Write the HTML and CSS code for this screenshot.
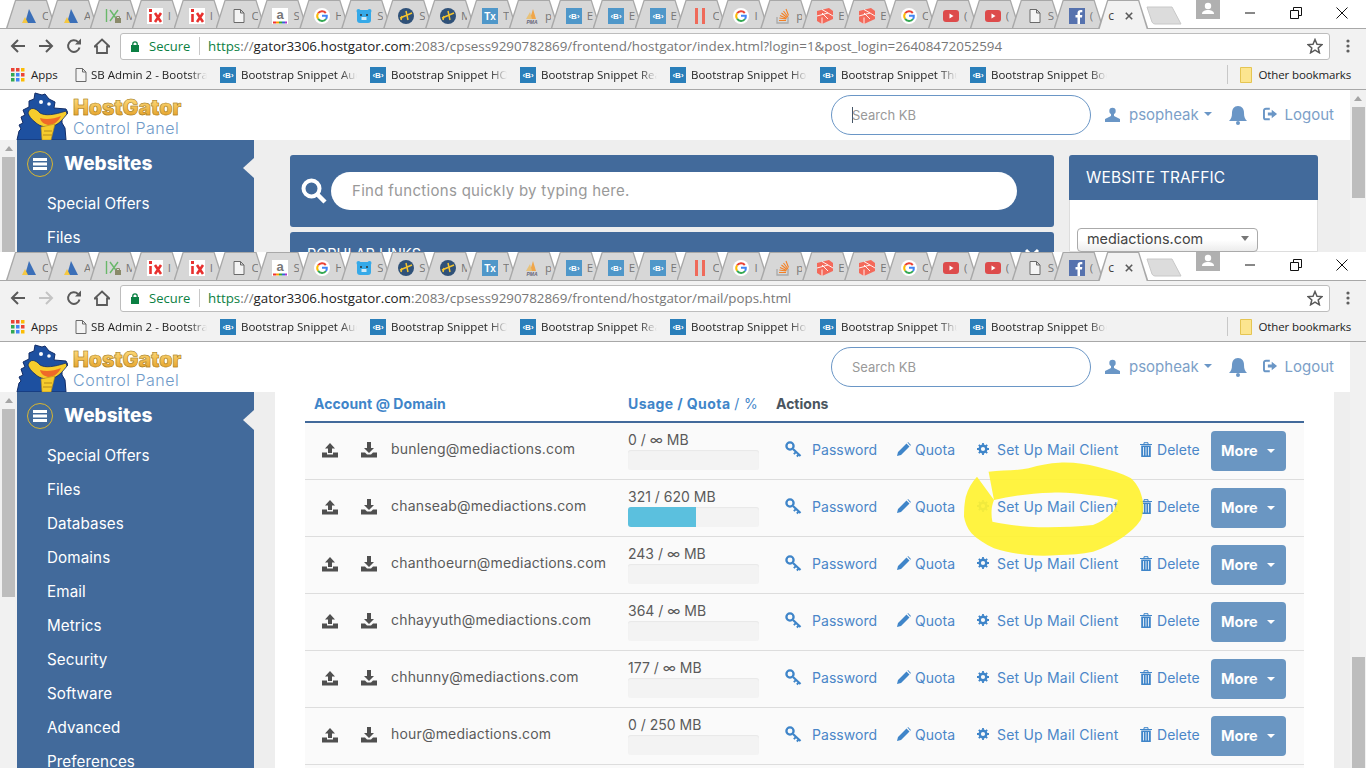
FILE: index.html
```html
<!DOCTYPE html>
<html lang="en">
<head>
<meta charset="utf-8">
<title>HostGator Control Panel</title>
<link rel="stylesheet" href="styles.css">
</head>
<body>
<svg class="defs" aria-hidden="true">
  <symbol id="i-ad" viewBox="0 0 16 16"><path d="M8 1 15 15H4Z" fill="#3b6fb8"/><path d="M1 15 4 9l3 6Z" fill="#f5c842"/></symbol>
  <symbol id="i-ixg" viewBox="0 0 16 16"><path d="M1.5 1v13M5 2l8 11M13 2 5 13" stroke="#69b86a" stroke-width="1.4" fill="none"/><rect x="10" y="10" width="6" height="5" fill="#8a8a6a"/><path d="M11.5 10V8.5h3V10" stroke="#8a8a6a" fill="none"/></symbol>
  <symbol id="i-ix" viewBox="0 0 16 16"><rect width="16" height="16" fill="#fff"/><path d="M3.5 6v8M8 5l6 9M14 5l-6 9" stroke="#e8312f" stroke-width="2.6" fill="none"/><rect x="2" y="1" width="3" height="3" fill="#e8312f"/></symbol>
  <symbol id="i-doc" viewBox="0 0 16 16"><path d="M3 1.5h6.5l3.5 3.5v9.500H3ZM9.500 1.500V5H13" fill="#f4f4f4" stroke="#6a6a6a"/></symbol>
  <symbol id="i-am" viewBox="0 0 16 16"><rect width="16" height="16" fill="#fff"/><text x="8" y="11" text-anchor="middle" class="ic-a">a</text><path d="M1 14.500h3" stroke="#e33" stroke-width="2"/><path d="M4 14.500h3" stroke="#f90" stroke-width="2"/><path d="M7 14.500h3" stroke="#3a3" stroke-width="2"/><path d="M10 14.500h3" stroke="#36c" stroke-width="2"/><path d="M13 14.500h2" stroke="#a3c" stroke-width="2"/></symbol>
  <symbol id="i-g" viewBox="0 0 16 16"><circle cx="8" cy="8" r="8" fill="#fff"/><path d="M11.800 5A4.800 4.800 0 0 0 4.100 5.300" stroke="#ea4335" stroke-width="2" fill="none"/><path d="M4.100 5.300a4.800 4.800 0 0 0 0 5.400" stroke="#fbbc05" stroke-width="2" fill="none"/><path d="M4.100 10.700A4.800 4.800 0 0 0 12 11" stroke="#34a853" stroke-width="2" fill="none"/><path d="M12 11a4.800 4.800 0 0 0 .8-3.200H8" stroke="#4285f4" stroke-width="2" fill="none"/></symbol>
  <symbol id="i-bear" viewBox="0 0 16 16"><circle cx="2.500" cy="3" r="2" fill="#35a9e8"/><circle cx="13.500" cy="3" r="2" fill="#35a9e8"/><rect x="1" y="2" width="14" height="13" rx="3" fill="#35a9e8"/><circle cx="5" cy="7" r="1" fill="#333"/><circle cx="11" cy="7" r="1" fill="#333"/><path d="M5.500 9h5v3h-5z" fill="#cfeaf8"/></symbol>
  <symbol id="i-plane" viewBox="0 0 16 16"><circle cx="8" cy="8" r="8" fill="#2f5178"/><path d="M2 10 14 5M8 3l2 9M4 8 3 12" stroke="#f4c430" stroke-width="1.500" fill="none"/></symbol>
  <symbol id="i-tx" viewBox="0 0 16 16"><rect width="16" height="16" fill="#4f97c9"/><text x="8" y="12" text-anchor="middle" class="ic-t">Tx</text></symbol>
  <symbol id="i-pma" viewBox="0 0 16 16"><path d="M6 11 9 1l3 10Z" fill="#f0a64a"/><path d="M2 11 6 4l2 7Z" fill="#e8c27a"/><text x="8" y="15.500" text-anchor="middle" class="ic-p">PMA</text></symbol>
  <symbol id="i-b" viewBox="0 0 16 16"><rect width="16" height="16" fill="#4f97c9"/><text x="8" y="11" text-anchor="middle" class="ic-b">‹B›</text></symbol>
  <symbol id="i-pause" viewBox="0 0 16 16"><rect x="3" y="0" width="3" height="16" fill="#ef6a5a"/><rect x="10" y="0" width="3" height="16" fill="#ef6a5a"/></symbol>
  <symbol id="i-so" viewBox="0 0 16 16"><path d="M2 9v6h11V9" stroke="#aaa" stroke-width="1.300" fill="none"/><path d="M4 12.500h7M4.300 10l7 1M5 7.500l6.500 3M6.500 5l5.500 4.500M8.500 3l4.500 6M11 1l2.500 6.500" stroke="#f48024" stroke-width="1.100" fill="none"/></symbol>
  <symbol id="i-lar" viewBox="0 0 16 16"><path d="M0 3 12 0 16 3V11L5 16 0 13Z" fill="#f4695a"/><path d="M0 8 11 5 16 8M5 16V9.500M11 5 5 1.500M5 5 11 11" stroke="#fff" stroke-width=".9" fill="none"/></symbol>
  <symbol id="i-yt" viewBox="0 0 16 16"><rect y="2" width="16" height="12" rx="3" fill="#dd4b4b"/><path d="M6.500 5.500v5l4-2.500Z" fill="#fff"/></symbol>
  <symbol id="i-fb" viewBox="0 0 16 16"><rect width="16" height="16" fill="#5672ae"/><path d="M11 16V9.500h2l.3-2.500H11V5.500c0-.8.3-1.200 1.200-1.200h1.100V2.100c-2.800-.5-4.800.3-4.800 3V7H6.500v2.500h2V16Z" fill="#fff"/></symbol>
  <symbol id="i-apps" viewBox="0 0 14 14"><rect width="3.500" height="3.500" fill="#ea4335"/><rect x="5" width="3.500" height="3.500" fill="#ea4335"/><rect x="10" width="3.500" height="3.500" fill="#fbbc05"/><rect y="5" width="3.500" height="3.500" fill="#34a853"/><rect x="5" y="5" width="3.500" height="3.500" fill="#4285f4"/><rect x="10" y="5" width="3.500" height="3.500" fill="#ea4335"/><rect y="10" width="3.500" height="3.500" fill="#34a853"/><rect x="5" y="10" width="3.500" height="3.500" fill="#4285f4"/><rect x="10" y="10" width="3.500" height="3.500" fill="#fbbc05"/></symbol>
  <symbol id="i-bb" viewBox="0 0 16 16"><rect width="16" height="16" fill="#2a7fba"/><text x="8" y="11" text-anchor="middle" class="ic-b">‹B›</text></symbol>
  <symbol id="i-up" viewBox="0 0 16 16"><path d="M8 1 13 6.500H10V11H6V6.500H3Z" fill="#4f4f4f"/><path d="M0 10.500H5V12.500H11V10.500H16V15.500H0Z" fill="#4f4f4f"/></symbol>
  <symbol id="i-down" viewBox="0 0 16 16"><path d="M6 0H10V6H13L8 11 3 6H6Z" fill="#4f4f4f"/><path d="M0 10.500H4L6 12.500H10L12 10.500H16V15.500H0Z" fill="#4f4f4f"/></symbol>
  <symbol id="i-key" viewBox="0 0 17 17"><circle cx="5" cy="5" r="3.600" fill="none" stroke="#3f85c9" stroke-width="2.300"/><path d="M8 8 15.500 15" stroke="#3f85c9" stroke-width="2.200" fill="none"/><path d="M11 11 8.800 13.200M13.800 13.500 11.800 15.500" stroke="#3f85c9" stroke-width="1.800" fill="none"/></symbol>
  <symbol id="i-pen" viewBox="0 0 14 14"><path d="M0 14 1 10 9.500 1.500 12.500 4.500 4 13Z M10.500.5 11 0l3 3-.8.8Z" fill="#3f85c9"/></symbol>
  <symbol id="i-gear" viewBox="0 0 12 12"><circle cx="6" cy="6" r="3.300" fill="none" stroke="#3f85c9" stroke-width="2.400"/><path d="M6 0v2.500M6 9.500V12M0 6h2.500M9.500 6H12M1.800 1.800l1.800 1.800M8.400 8.400l1.800 1.800M1.800 10.200l1.800-1.800M8.400 3.600l1.800-1.800" stroke="#3f85c9" stroke-width="1.800"/></symbol>
  <symbol id="i-trash" viewBox="0 0 12 15"><path d="M0 2.500H12M4 2.500V.7H8V2.500" stroke="#3f85c9" fill="none"/><path d="M1.200 3.500H10.800V15H1.200Z" fill="#3f85c9"/><path d="M3.500 5V13.500M6 5V13.500M8.500 5V13.500" stroke="#dbe8f5" stroke-width="1"/></symbol>
  <symbol id="i-user" viewBox="0 0 15 15"><circle cx="7.500" cy="4" r="3.200" fill="#6a96c6"/><path d="M6 7h3v2l6 3v3H0v-3l6-3Z" fill="#6a96c6"/></symbol>
  <symbol id="i-bell" viewBox="0 0 20 20"><path d="M10 1c4 0 6 3 6 7 0 4 1 6 3 8H1c2-2 3-4 3-8 0-4 2-7 6-7Z" fill="#6a96c6"/><circle cx="10" cy="18" r="2" fill="#6a96c6"/></symbol>
  <symbol id="i-out" viewBox="0 0 15 14"><path d="M7 1.500H3A2 2 0 0 0 1 3.500V10.500A2 2 0 0 0 3 12.500H7" fill="none" stroke="#6a96c6" stroke-width="2"/><path d="M5 5.500H9V2.500L14.500 7 9 11.500V8.500H5Z" fill="#6a96c6"/></symbol>
  <symbol id="i-gator" viewBox="0 0 52 48"><path d="M1 48 3 39 5 37 3 33 7 31 5 25 9 23 7 18 13 15 13 9 18 7 19 1 26 3 29 2 33 7 39 10 38 16 50 17 52 21 49 23 46 27 46 31 49 36 50 48Z" fill="#1d50a0" stroke="#122c66"/><path d="M12 21C14 14 20 16 24 21 29 24 38 23 50 19L51 22C47 27 44 31 38 34 31 36 24 35 19 30 15 27 13 24 12 21Z" fill="#f6cc2c" stroke="#122c66" stroke-width=".8"/><path d="M24 26C30 28 38 27 45 24 43 29 38 33 32 33 28 32 25 30 24 26Z" fill="#ef6a28"/><path d="M25 35 39 32 35 48H26Z" fill="#f6cc2c" stroke="#b68a1c" stroke-width=".6"/><path d="M28 39H36M27 43H36" stroke="#b68a1c"/><circle cx="25" cy="10" r="2" fill="#fff"/><circle cx="33" cy="12" r="1.800" fill="#fff"/></symbol>
  <symbol id="i-server" viewBox="0 0 26 26"><circle cx="13" cy="13" r="12.500" fill="none" stroke="#d9b62f"/><path d="M6 7H20V10H6ZM6 11.500H20V14.500H6ZM6 16H20V19H6Z" fill="#fff"/></symbol>
  <symbol id="i-search" viewBox="0 0 26 26"><circle cx="10.500" cy="10.500" r="8" fill="none" stroke="#fff" stroke-width="4"/><path d="M16.500 16.500 24 24" stroke="#fff" stroke-width="4.500"/></symbol>
  <symbol id="i-lock" viewBox="0 0 8 11"><rect y="4" width="8" height="7" fill="#0b8043"/><path d="M1.800 4.500V3a2.200 2.200 0 0 1 4.400 0V4.500" fill="none" stroke="#0b8043" stroke-width="1.300"/></symbol>
  <symbol id="i-star" viewBox="0 0 16 16"><path d="M8 1.500 10 6.200 15 6.600 11.200 9.900 12.400 14.800 8 12.200 3.600 14.800 4.800 9.900 1 6.600 6 6.200Z" fill="none" stroke="#5a5a5a" stroke-width="1.500"/></symbol>
  <symbol id="i-dots" viewBox="0 0 4 14"><circle cx="2" cy="2" r="1.600" fill="#5f5f5f"/><circle cx="2" cy="7" r="1.600" fill="#5f5f5f"/><circle cx="2" cy="12" r="1.600" fill="#5f5f5f"/></symbol>
  <symbol id="i-back" viewBox="0 0 16 16"><path d="M15 8H2M8 2 2 8l6 6" fill="none" stroke="currentColor" stroke-width="2"/></symbol>
  <symbol id="i-fwd" viewBox="0 0 16 16"><path d="M1 8H14M8 2l6 6-6 6" fill="none" stroke="currentColor" stroke-width="2"/></symbol>
  <symbol id="i-reload" viewBox="0 0 16 16"><path d="M13.500 9.500A5.800 5.800 0 1 1 12 4" fill="none" stroke="#5a5a5a" stroke-width="2"/><path d="M9 6.500H15V.5Z" fill="#5a5a5a"/></symbol>
  <symbol id="i-home" viewBox="0 0 16 16"><path d="M8 1.500 15.500 8.500H13V15H3V8.500H.5Z" fill="none" stroke="#5a5a5a" stroke-width="1.800"/></symbol>
  <symbol id="i-folder" viewBox="0 0 12 16"><path d="M.5.500H11.500V15.500H.5Z" fill="#fce58f" stroke="#e5c552"/></symbol>
  <symbol id="i-person" viewBox="0 0 24 19"><circle cx="12" cy="6" r="3.200" fill="#fff"/><path d="M6 14c0-3 3-4 6-4s6 1 6 4Z" fill="#fff"/></symbol>
  <symbol id="i-newtab" viewBox="0 0 36 19"><path d="M1 1H26L35 18H9Q7 18 6 16Z" fill="#dcdcdc" stroke="#c8c8c8"/></symbol>
  <symbol id="i-min" viewBox="0 0 12 12"><path d="M1 6H11" stroke="#111" stroke-width="1"/></symbol>
  <symbol id="i-max" viewBox="0 0 12 12"><path d="M.5 3.500H8.500V11.500H.5ZM3.500 3.500V.5H11.500V8.500H8.500" fill="none" stroke="#111"/></symbol>
  <symbol id="i-close" viewBox="0 0 12 12"><path d="M.5.500 11.500 11.500M11.500.5.500 11.500" stroke="#111"/></symbol>
  <symbol id="i-x" viewBox="0 0 10 10"><path d="M1 1 9 9M9 1 1 9" stroke="#5a5a5a" stroke-width="2"/></symbol>
</svg>

<section class="win win-a">
  <div class="tabstrip">
    <div class="tab"><svg class="fav"><use href="#i-ad"/></svg><span class="tl">C</span></div>
    <div class="tab"><svg class="fav"><use href="#i-ad"/></svg><span class="tl">A</span></div>
    <div class="tab"><svg class="fav"><use href="#i-ixg"/></svg><span class="tl">M</span></div>
    <div class="tab"><svg class="fav"><use href="#i-ix"/></svg><span class="tl">I</span></div>
    <div class="tab"><svg class="fav"><use href="#i-ix"/></svg><span class="tl">I</span></div>
    <div class="tab"><svg class="fav"><use href="#i-doc"/></svg><span class="tl">C</span></div>
    <div class="tab"><svg class="fav"><use href="#i-am"/></svg><span class="tl">S</span></div>
    <div class="tab"><svg class="fav"><use href="#i-g"/></svg><span class="tl">H</span></div>
    <div class="tab"><svg class="fav"><use href="#i-bear"/></svg><span class="tl">S</span></div>
    <div class="tab"><svg class="fav"><use href="#i-plane"/></svg><span class="tl">S</span></div>
    <div class="tab"><svg class="fav"><use href="#i-plane"/></svg><span class="tl">M</span></div>
    <div class="tab"><svg class="fav"><use href="#i-tx"/></svg><span class="tl">T</span></div>
    <div class="tab"><svg class="fav"><use href="#i-pma"/></svg><span class="tl">p</span></div>
    <div class="tab"><svg class="fav"><use href="#i-b"/></svg><span class="tl">E</span></div>
    <div class="tab"><svg class="fav"><use href="#i-b"/></svg><span class="tl">E</span></div>
    <div class="tab"><svg class="fav"><use href="#i-b"/></svg><span class="tl">E</span></div>
    <div class="tab"><svg class="fav"><use href="#i-pause"/></svg><span class="tl">C</span></div>
    <div class="tab"><svg class="fav"><use href="#i-g"/></svg><span class="tl">I</span></div>
    <div class="tab"><svg class="fav"><use href="#i-so"/></svg><span class="tl">p</span></div>
    <div class="tab"><svg class="fav"><use href="#i-lar"/></svg><span class="tl">E</span></div>
    <div class="tab"><svg class="fav"><use href="#i-lar"/></svg><span class="tl">E</span></div>
    <div class="tab"><svg class="fav"><use href="#i-g"/></svg><span class="tl">C</span></div>
    <div class="tab"><svg class="fav"><use href="#i-yt"/></svg><span class="tl">(</span></div>
    <div class="tab"><svg class="fav"><use href="#i-yt"/></svg><span class="tl">(</span></div>
    <div class="tab"><svg class="fav"><use href="#i-doc"/></svg><span class="tl">S</span></div>
    <div class="tab"><svg class="fav"><use href="#i-fb"/></svg><span class="tl">(</span></div>
    <div class="tab tab-on"><span class="tl-on">c</span><svg class="tabx"><use href="#i-x"/></svg></div>
    <svg class="newtab"><use href="#i-newtab"/></svg>
    <div class="profile"><svg class="person"><use href="#i-person"/></svg></div>
    <div class="winbtn"><svg class="wi"><use href="#i-min"/></svg></div>
    <div class="winbtn"><svg class="wi"><use href="#i-max"/></svg></div>
    <div class="winbtn"><svg class="wi"><use href="#i-close"/></svg></div>
  </div>
  <div class="toolbar">
    <div class="nav"><svg class="ni"><use href="#i-back"/></svg></div>
    <div class="nav"><svg class="ni"><use href="#i-fwd"/></svg></div>
    <div class="nav"><svg class="ni"><use href="#i-reload"/></svg></div>
    <div class="nav"><svg class="ni"><use href="#i-home"/></svg></div>
    <div class="omni">
      <svg class="lock"><use href="#i-lock"/></svg><span class="secure">Secure</span><span class="osep"></span>
      <span class="url"><span class="u-s">https</span>://<span class="u-h">gator3306.hostgator.com</span>:2083/cpsess9290782869/frontend/hostgator/index.html?login=1&amp;post_login=26408472052594</span>
      <svg class="star"><use href="#i-star"/></svg>
    </div>
    <div class="menu"><svg class="dots"><use href="#i-dots"/></svg></div>
  </div>
  <div class="bookmarks">
    <div class="bm bm-apps"><svg class="bmi-apps"><use href="#i-apps"/></svg><span>Apps</span></div>
    <div class="bm bm-sb"><svg class="bmi"><use href="#i-doc"/></svg><span class="bl">SB Admin 2 - Bootstrap</span></div>
    <div class="bm"><svg class="bmi"><use href="#i-bb"/></svg><span class="bl">Bootstrap Snippet Auc</span></div>
    <div class="bm"><svg class="bmi"><use href="#i-bb"/></svg><span class="bl">Bootstrap Snippet HO</span></div>
    <div class="bm"><svg class="bmi"><use href="#i-bb"/></svg><span class="bl">Bootstrap Snippet Rea</span></div>
    <div class="bm"><svg class="bmi"><use href="#i-bb"/></svg><span class="bl">Bootstrap Snippet Ho</span></div>
    <div class="bm"><svg class="bmi"><use href="#i-bb"/></svg><span class="bl">Bootstrap Snippet Thu</span></div>
    <div class="bm"><svg class="bmi"><use href="#i-bb"/></svg><span class="bl">Bootstrap Snippet Boo</span></div>
    <div class="bm-other"><svg class="bmf"><use href="#i-folder"/></svg><span>Other bookmarks</span></div>
  </div>
  <div class="page">
    <div class="page-main">
      <header class="hdr">
        <div class="logo"><svg class="gator"><use href="#i-gator"/></svg><div class="logo-t"><div class="lg1">HostGator</div><div class="lg2">Control Panel</div></div></div>
        <div class="kb kb-focus"><span class="caret-i"></span>Search KB</div>
        <div class="hu"><svg class="hu-i"><use href="#i-user"/></svg><span>psopheak</span><span class="dd"></span></div>
        <div class="hb"><svg class="hb-i"><use href="#i-bell"/></svg></div>
        <div class="hl"><svg class="hl-i"><use href="#i-out"/></svg><span>Logout</span></div>
      </header>
      <div class="body">
        <div class="sscroll"><span class="sarrow"></span><span class="sthumb"></span></div>
        <nav class="side">
          <div class="side-h"><svg class="srv"><use href="#i-server"/></svg><span>Websites</span><i class="notch"></i></div>
          <div class="side-i">Special Offers</div>
          <div class="side-i">Files</div>
        </nav>
        <main class="home">
          <div class="home-l">
            <div class="findp"><svg class="findi"><use href="#i-search"/></svg><div class="findb">Find functions quickly by typing here.</div></div>
            <div class="popular"><span>POPULAR LINKS</span><span class="pchev"></span></div>
          </div>
          <aside class="traffic">
            <div class="traffic-h">WEBSITE TRAFFIC</div>
            <div class="traffic-b"><div class="sel"><span>mediactions.com</span><i class="sel-a"></i></div></div>
          </aside>
        </main>
      </div>
    </div>
    <div class="vscroll"><span class="sarrow"></span><span class="vthumb-a"></span></div>
  </div>
</section>

<section class="win win-b">
  <div class="tabstrip">
    <div class="tab"><svg class="fav"><use href="#i-ad"/></svg><span class="tl">C</span></div>
    <div class="tab"><svg class="fav"><use href="#i-ad"/></svg><span class="tl">A</span></div>
    <div class="tab"><svg class="fav"><use href="#i-ixg"/></svg><span class="tl">M</span></div>
    <div class="tab"><svg class="fav"><use href="#i-ix"/></svg><span class="tl">I</span></div>
    <div class="tab"><svg class="fav"><use href="#i-ix"/></svg><span class="tl">I</span></div>
    <div class="tab"><svg class="fav"><use href="#i-doc"/></svg><span class="tl">C</span></div>
    <div class="tab"><svg class="fav"><use href="#i-am"/></svg><span class="tl">S</span></div>
    <div class="tab"><svg class="fav"><use href="#i-g"/></svg><span class="tl">H</span></div>
    <div class="tab"><svg class="fav"><use href="#i-bear"/></svg><span class="tl">S</span></div>
    <div class="tab"><svg class="fav"><use href="#i-plane"/></svg><span class="tl">S</span></div>
    <div class="tab"><svg class="fav"><use href="#i-plane"/></svg><span class="tl">M</span></div>
    <div class="tab"><svg class="fav"><use href="#i-tx"/></svg><span class="tl">T</span></div>
    <div class="tab"><svg class="fav"><use href="#i-pma"/></svg><span class="tl">p</span></div>
    <div class="tab"><svg class="fav"><use href="#i-b"/></svg><span class="tl">E</span></div>
    <div class="tab"><svg class="fav"><use href="#i-b"/></svg><span class="tl">E</span></div>
    <div class="tab"><svg class="fav"><use href="#i-b"/></svg><span class="tl">E</span></div>
    <div class="tab"><svg class="fav"><use href="#i-pause"/></svg><span class="tl">C</span></div>
    <div class="tab"><svg class="fav"><use href="#i-g"/></svg><span class="tl">I</span></div>
    <div class="tab"><svg class="fav"><use href="#i-so"/></svg><span class="tl">p</span></div>
    <div class="tab"><svg class="fav"><use href="#i-lar"/></svg><span class="tl">E</span></div>
    <div class="tab"><svg class="fav"><use href="#i-lar"/></svg><span class="tl">E</span></div>
    <div class="tab"><svg class="fav"><use href="#i-g"/></svg><span class="tl">C</span></div>
    <div class="tab"><svg class="fav"><use href="#i-yt"/></svg><span class="tl">(</span></div>
    <div class="tab"><svg class="fav"><use href="#i-yt"/></svg><span class="tl">(</span></div>
    <div class="tab"><svg class="fav"><use href="#i-doc"/></svg><span class="tl">S</span></div>
    <div class="tab"><svg class="fav"><use href="#i-fb"/></svg><span class="tl">(</span></div>
    <div class="tab tab-on"><span class="tl-on">c</span><svg class="tabx"><use href="#i-x"/></svg></div>
    <svg class="newtab"><use href="#i-newtab"/></svg>
    <div class="profile"><svg class="person"><use href="#i-person"/></svg></div>
    <div class="winbtn"><svg class="wi"><use href="#i-min"/></svg></div>
    <div class="winbtn"><svg class="wi"><use href="#i-max"/></svg></div>
    <div class="winbtn"><svg class="wi"><use href="#i-close"/></svg></div>
  </div>
  <div class="toolbar">
    <div class="nav"><svg class="ni"><use href="#i-back"/></svg></div>
    <div class="nav nav-off"><svg class="ni"><use href="#i-fwd"/></svg></div>
    <div class="nav"><svg class="ni"><use href="#i-reload"/></svg></div>
    <div class="nav"><svg class="ni"><use href="#i-home"/></svg></div>
    <div class="omni">
      <svg class="lock"><use href="#i-lock"/></svg><span class="secure">Secure</span><span class="osep"></span>
      <span class="url"><span class="u-s">https</span>://<span class="u-h">gator3306.hostgator.com</span>:2083/cpsess9290782869/frontend/hostgator/mail/pops.html</span>
      <svg class="star"><use href="#i-star"/></svg>
    </div>
    <div class="menu"><svg class="dots"><use href="#i-dots"/></svg></div>
  </div>
  <div class="bookmarks">
    <div class="bm bm-apps"><svg class="bmi-apps"><use href="#i-apps"/></svg><span>Apps</span></div>
    <div class="bm bm-sb"><svg class="bmi"><use href="#i-doc"/></svg><span class="bl">SB Admin 2 - Bootstrap</span></div>
    <div class="bm"><svg class="bmi"><use href="#i-bb"/></svg><span class="bl">Bootstrap Snippet Auc</span></div>
    <div class="bm"><svg class="bmi"><use href="#i-bb"/></svg><span class="bl">Bootstrap Snippet HO</span></div>
    <div class="bm"><svg class="bmi"><use href="#i-bb"/></svg><span class="bl">Bootstrap Snippet Rea</span></div>
    <div class="bm"><svg class="bmi"><use href="#i-bb"/></svg><span class="bl">Bootstrap Snippet Ho</span></div>
    <div class="bm"><svg class="bmi"><use href="#i-bb"/></svg><span class="bl">Bootstrap Snippet Thu</span></div>
    <div class="bm"><svg class="bmi"><use href="#i-bb"/></svg><span class="bl">Bootstrap Snippet Boo</span></div>
    <div class="bm-other"><svg class="bmf"><use href="#i-folder"/></svg><span>Other bookmarks</span></div>
  </div>
  <div class="page">
    <div class="page-main">
      <header class="hdr">
        <div class="logo"><svg class="gator"><use href="#i-gator"/></svg><div class="logo-t"><div class="lg1">HostGator</div><div class="lg2">Control Panel</div></div></div>
        <div class="kb">Search KB</div>
        <div class="hu"><svg class="hu-i"><use href="#i-user"/></svg><span>psopheak</span><span class="dd"></span></div>
        <div class="hb"><svg class="hb-i"><use href="#i-bell"/></svg></div>
        <div class="hl"><svg class="hl-i"><use href="#i-out"/></svg><span>Logout</span></div>
      </header>
      <div class="body">
        <div class="sscroll"><span class="sarrow"></span><span class="sthumb"></span></div>
        <nav class="side">
          <div class="side-h"><svg class="srv"><use href="#i-server"/></svg><span>Websites</span><i class="notch"></i></div>
          <div class="side-i">Special Offers</div>
          <div class="side-i">Files</div>
          <div class="side-i">Databases</div>
          <div class="side-i">Domains</div>
          <div class="side-i">Email</div>
          <div class="side-i">Metrics</div>
          <div class="side-i">Security</div>
          <div class="side-i">Software</div>
          <div class="side-i">Advanced</div>
          <div class="side-i">Preferences</div>
        </nav>
        <main class="mail">
          <div class="mail-in">
            <div class="thead"><span class="th-a">Account @ Domain</span><span class="th-u">Usage / Quota <em>/ %</em></span><span class="th-c">Actions</span></div>

            <div class="row">
              <div class="c-io"><svg class="io"><use href="#i-up"/></svg><svg class="io"><use href="#i-down"/></svg></div>
              <div class="c-mail">bunleng@mediactions.com</div>
              <div class="c-use"><div class="u-t">0 / ∞ MB</div><div class="bar"></div></div>
              <div class="a-pw"><svg class="a-key"><use href="#i-key"/></svg>Password</div>
              <div class="a-q"><svg class="a-pen"><use href="#i-pen"/></svg>Quota</div>
              <div class="a-c"><svg class="a-gear"><use href="#i-gear"/></svg>Set Up Mail Client</div>
              <div class="a-d"><svg class="a-tr"><use href="#i-trash"/></svg>Delete</div>
              <div class="more">More<span class="more-c"></span></div>
            </div>
            <div class="row">
              <div class="c-io"><svg class="io"><use href="#i-up"/></svg><svg class="io"><use href="#i-down"/></svg></div>
              <div class="c-mail">chanseab@mediactions.com</div>
              <div class="c-use"><div class="u-t">321 / 620 MB</div><div class="bar"><div class="fill" style="width:52%"></div></div></div>
              <div class="a-pw"><svg class="a-key"><use href="#i-key"/></svg>Password</div>
              <div class="a-q"><svg class="a-pen"><use href="#i-pen"/></svg>Quota</div>
              <div class="a-c"><svg class="a-gear"><use href="#i-gear"/></svg>Set Up Mail Client</div>
              <div class="a-d"><svg class="a-tr"><use href="#i-trash"/></svg>Delete</div>
              <div class="more">More<span class="more-c"></span></div>
            </div>
            <div class="row">
              <div class="c-io"><svg class="io"><use href="#i-up"/></svg><svg class="io"><use href="#i-down"/></svg></div>
              <div class="c-mail">chanthoeurn@mediactions.com</div>
              <div class="c-use"><div class="u-t">243 / ∞ MB</div><div class="bar"></div></div>
              <div class="a-pw"><svg class="a-key"><use href="#i-key"/></svg>Password</div>
              <div class="a-q"><svg class="a-pen"><use href="#i-pen"/></svg>Quota</div>
              <div class="a-c"><svg class="a-gear"><use href="#i-gear"/></svg>Set Up Mail Client</div>
              <div class="a-d"><svg class="a-tr"><use href="#i-trash"/></svg>Delete</div>
              <div class="more">More<span class="more-c"></span></div>
            </div>
            <div class="row">
              <div class="c-io"><svg class="io"><use href="#i-up"/></svg><svg class="io"><use href="#i-down"/></svg></div>
              <div class="c-mail">chhayyuth@mediactions.com</div>
              <div class="c-use"><div class="u-t">364 / ∞ MB</div><div class="bar"></div></div>
              <div class="a-pw"><svg class="a-key"><use href="#i-key"/></svg>Password</div>
              <div class="a-q"><svg class="a-pen"><use href="#i-pen"/></svg>Quota</div>
              <div class="a-c"><svg class="a-gear"><use href="#i-gear"/></svg>Set Up Mail Client</div>
              <div class="a-d"><svg class="a-tr"><use href="#i-trash"/></svg>Delete</div>
              <div class="more">More<span class="more-c"></span></div>
            </div>
            <div class="row">
              <div class="c-io"><svg class="io"><use href="#i-up"/></svg><svg class="io"><use href="#i-down"/></svg></div>
              <div class="c-mail">chhunny@mediactions.com</div>
              <div class="c-use"><div class="u-t">177 / ∞ MB</div><div class="bar"></div></div>
              <div class="a-pw"><svg class="a-key"><use href="#i-key"/></svg>Password</div>
              <div class="a-q"><svg class="a-pen"><use href="#i-pen"/></svg>Quota</div>
              <div class="a-c"><svg class="a-gear"><use href="#i-gear"/></svg>Set Up Mail Client</div>
              <div class="a-d"><svg class="a-tr"><use href="#i-trash"/></svg>Delete</div>
              <div class="more">More<span class="more-c"></span></div>
            </div>
            <div class="row">
              <div class="c-io"><svg class="io"><use href="#i-up"/></svg><svg class="io"><use href="#i-down"/></svg></div>
              <div class="c-mail">hour@mediactions.com</div>
              <div class="c-use"><div class="u-t">0 / 250 MB</div><div class="bar"></div></div>
              <div class="a-pw"><svg class="a-key"><use href="#i-key"/></svg>Password</div>
              <div class="a-q"><svg class="a-pen"><use href="#i-pen"/></svg>Quota</div>
              <div class="a-c"><svg class="a-gear"><use href="#i-gear"/></svg>Set Up Mail Client</div>
              <div class="a-d"><svg class="a-tr"><use href="#i-trash"/></svg>Delete</div>
              <div class="more">More<span class="more-c"></span></div>
            </div>
            <div class="row"></div>
          </div>
        </main>
      </div>
    </div>
    <div class="vscroll"><span class="vthumb-b"></span></div>
  </div>
  <svg class="scribble" viewBox="964 462 180 94" aria-hidden="true"><path d="M988.600 471.700C1002 470 1016 471 1028.600 468.300C1040 465 1050 463 1059 462.700C1073 462 1086 464 1097 466.700C1110 470 1122 473 1131 478.300C1138 485 1141 492 1142.600 500C1144 507 1143 514 1140.700 520C1136 527 1130 532 1123.600 536.700C1114 543 1104 548 1093 551.700C1082 554 1070 555 1059 555C1048 556 1038 556 1028.600 555C1016 554 1005 552 994 548.300C985 544 977 539 971.500 533.300C967 528 965 522 964 516.700C964 509 964.500 503 965.800 496.700C968 489 972 482 977 476.700L994 500C991 507 991 515 992.400 521.700C1004 524 1016 526 1028.600 526.700C1050 528 1072 527 1093 525C1101 522 1107 518 1112 513C1115 509 1117 504 1118 500C1109 497 1099 496 1089 495C1076 493 1063 492 1051 492.700C1032 493 1012 496 994 500Z" class="scribble-p"/></svg>
</section>
</body>
</html>
```
FILE: styles.css
```css
* { box-sizing: border-box; }
html, body { margin: 0; padding: 0; height: 100%; }
body { width: 1366px; height: 768px; overflow: hidden; font-family: "Inter", "Liberation Sans", sans-serif; background: #fff; display: flex; flex-direction: column; }
.defs { position: absolute; width: 0; height: 0; overflow: hidden; }
.ic-a { font: 700 13px "Liberation Sans", sans-serif; fill: #777; }
.ic-t { font: 700 10px "Liberation Sans", sans-serif; fill: #fff; }
.ic-p { font: italic 700 5px "Liberation Sans", sans-serif; fill: #667; }
.ic-b { font: 700 8px "Liberation Sans", sans-serif; fill: #fff; }

.win { position: relative; overflow: hidden; display: flex; flex-direction: column; flex: none; }
.win-a { height: 252px; }
.win-b { height: 516px; }

/* tab strip */
.tabstrip { height: 28px; flex: none; display: flex; padding-left: 6px; background: #fff; position: relative; }
.tab { width: 50px; height: 28px; margin-right: -8.1px; flex: none; position: relative; display: flex; align-items: center; padding: 3px 0 0 15px; isolation: isolate; }
.tab::before, .tab::after { content: ""; position: absolute; z-index: -1; inset: 0; }
.tab::before { background: #a8a8a8; clip-path: polygon(0 100%, 9px 0, 41px 0, 100% 100%); }
.tab::after { background: #d7d7d7; clip-path: polygon(1.500px 100%, 10px 1px, 40px 1px, 48.500px 100%); }
.fav { width: 16px; height: 16px; flex: none; }
.tl { width: 6px; margin-left: 5px; overflow: hidden; font: 11.500px "Open Sans", sans-serif; color: #777; line-height: 16px; }
.tab-on { margin: 0 0 0 2.600px; height: 29px; width: 50px; z-index: 2; padding: 2px 0 0 10px; }
.tab-on::after { background: #f2f2f2; }
.tab-on::before { bottom: 1px; }
.tl-on { font: 12px "Open Sans", sans-serif; color: #444; width: 17px; }
.tabx { width: 8px; height: 8px; }
.newtab { width: 36px; height: 19px; margin: 6px 0 0 -2px; flex: none; }
.profile { width: 24px; height: 19px; margin-left: 14px; background: #b0b0b0; flex: none; }
.person { width: 24px; height: 19px; display: block; }
.winbtn { width: 46px; height: 28px; display: flex; align-items: center; justify-content: center; flex: none; padding-bottom: 2px; }
.profile + .winbtn { margin-left: 7px; }
.wi { width: 12px; height: 12px; }

/* toolbar */
.toolbar { height: 35px; flex: none; display: flex; align-items: center; padding: 0 0 0 4px; background: #f2f2f2; border-top: 1px solid #a8a8a8; }
.nav { width: 28px; height: 28px; display: flex; align-items: center; justify-content: center; color: #5a5a5a; flex: none; }
.nav-off { color: #c4c4c4; }
.ni { width: 16px; height: 16px; }
.omni { width: 1210px; height: 27px; margin-left: 4px; background: #fff; border: 1px solid #bdbdbd; border-radius: 3px; display: flex; align-items: center; padding: 0 6px 0 10px; flex: none; }
.lock { width: 8px; height: 11px; flex: none; }
.secure { font: 13px "Open Sans", sans-serif; color: #0b8043; margin-left: 10px; width: 50px; flex: none; }
.osep { width: 1px; height: 18px; background: #c8c8c8; flex: none; }
.url { font: 13.350px "Open Sans", sans-serif; color: #777; margin-left: 8px; white-space: nowrap; flex: 1; }
.u-s { color: #0b8043; }
.u-h { color: #222; }
.star { width: 16px; height: 16px; flex: none; }
.menu { flex: 1; display: flex; justify-content: center; }
.dots { width: 4px; height: 14px; }

/* bookmarks */
.bookmarks { height: 27px; flex: none; display: flex; align-items: center; padding: 0 0 3px 11px; background: #f2f2f2; border-bottom: 1px solid #a8a8a8; font: 11.500px "Open Sans", sans-serif; color: #222; }
.bm { width: 150px; display: flex; align-items: center; flex: none; }
.bm-apps { width: 62px; }
.bm-sb { width: 147px; }
.bmi-apps { width: 14px; height: 14px; margin-right: 6px; flex: none; }
.bmi { width: 16px; height: 16px; margin-right: 5px; flex: none; }
.bm-sb .bmi { margin-right: 2px; }
.bl { width: 116px; white-space: nowrap; overflow: hidden; mask-image: linear-gradient(90deg, #000 85%, transparent); -webkit-mask-image: linear-gradient(90deg, #000 85%, transparent); }
.bm-other { margin-left: auto; display: flex; align-items: center; height: 19px; border-left: 1px solid #c8c8c8; padding: 0 15px 0 12px; letter-spacing: -.13px; }
.bmf { width: 12px; height: 16px; margin-right: 7px; }

/* page */
.page { flex: 1; min-height: 0; display: flex; background: #fff; }
.page-main { width: 1350px; display: flex; flex-direction: column; min-height: 0; }
.hdr { height: 50px; flex: none; display: flex; align-items: center; padding: 0 16px; background: #fff; }
.logo { display: flex; align-self: flex-start; margin-top: 2px; }
.gator { width: 52px; height: 48px; flex: none; }
.logo-t { margin-left: 5px; }
.lg1 { font: 900 21px/22px "Inter", sans-serif; letter-spacing: 0; margin-top: 5px; background: linear-gradient(#ffdf80, #e29a1e); -webkit-background-clip: text; background-clip: text; color: transparent; -webkit-text-stroke: .5px #9a7420; }
.lg2 { font: 300 16px/18px "Inter", sans-serif; color: #6f9bc9; letter-spacing: .5px; }
.kb { width: 260px; height: 40px; margin-left: auto; border: 1px solid #6a96c6; border-radius: 20px; display: flex; align-items: center; padding-left: 20px; font-size: 13px; color: #999; }
.caret-i { width: 1px; height: 16px; background: #456; margin-right: -1px; }
.hu { width: 123px; margin-left: 14px; padding-bottom: 2px; display: flex; align-items: center; color: #7c9fc8; font-size: 15px; }
.hu-i { width: 15px; height: 15px; margin-right: 9px; }
.dd { width: 0; height: 0; margin-left: 5px; border: 4px solid transparent; border-top-color: #6a96c6; border-bottom: 0; }
.hb { width: 35px; display: flex; }
.hb-i { width: 20px; height: 20px; }
.hl { width: 71px; padding-bottom: 2px; display: flex; align-items: center; color: #7c9fc8; font-size: 15px; }
.hl-i { width: 15px; height: 14px; margin-right: 7px; }
.body { flex: 1; min-height: 0; display: flex; background: #eee; overflow: hidden; }
.sscroll { width: 17px; flex: none; background: #f1f1f1; display: flex; flex-direction: column; align-items: center; }
.sarrow { width: 0; height: 0; margin-top: 6px; border: 4px solid transparent; border-bottom: 5px solid #a5a5a5; border-top: 0; flex: none; }
.sthumb { width: 13px; height: 188px; margin-top: 6px; background: #bdbdbd; flex: none; }
.side { width: 237px; flex: none; background: #426a9b; color: #fff; }
.side-h { height: 47px; position: relative; display: flex; align-items: center; padding-left: 10px; font-weight: 800; font-size: 19px; }
.srv { width: 26px; height: 26px; margin-right: 11px; flex: none; }
.notch { position: absolute; right: 0; top: 18px; width: 0; height: 0; border: 10px solid transparent; border-right: 11px solid #eee; border-left: 0; }
.side-i { height: 34px; line-height: 34px; padding-left: 30px; font-size: 15.200px; letter-spacing: .1px; }

/* home (window a) */
.home { flex: 1; display: flex; padding: 15px 0 0 36px; gap: 15px; background: #eee; }
.home-l { width: 764px; flex: none; }
.findp { height: 72px; background: #426a9b; border-radius: 3px; display: flex; align-items: center; padding-left: 11px; }
.findi { width: 26px; height: 26px; flex: none; }
.findb { width: 686px; height: 38px; margin-left: 4px; background: #fff; border-radius: 19px; padding-left: 21px; line-height: 38px; font-size: 15px; letter-spacing: .3px; color: #999; }
.popular { margin-top: 5px; height: 50px; background: #426a9b; border-radius: 3px; color: #fff; font-size: 14.500px; padding: 13px 17px; display: flex; justify-content: space-between; }
.pchev { width: 10px; height: 10px; margin-top: 1px; border-right: 3px solid #fff; border-bottom: 3px solid #fff; transform: rotate(45deg); }
.traffic { width: 249px; flex: none; background: #fff; border: 1px solid #ddd; border-radius: 3px 3px 0 0; }
.traffic-h { height: 45px; margin: -1px -1px 0; background: #426a9b; color: #fff; font-size: 15.500px; letter-spacing: .15px; padding: 13px 17px 0; border-radius: 3px 3px 0 0; }
.traffic-b { padding: 28px 7px 0; }
.sel { width: 181px; height: 24px; border: 1px solid #aaa; border-radius: 4px; background: linear-gradient(#fff, #fff 50%, #ececec); display: flex; align-items: center; justify-content: space-between; padding: 0 8px 3px 9px; font-size: 14.400px; color: #444; }
.sel-a { width: 0; height: 0; border: 4px solid transparent; border-top: 5px solid #777; border-bottom: 0; }

.vscroll { width: 16px; flex: none; background: #f1f1f1; display: flex; flex-direction: column; align-items: center; }
.vthumb-a { width: 13px; height: 91px; margin-top: 6px; background: #bdbdbd; flex: none; }
.vthumb-b { width: 13px; height: 111px; margin-top: 315px; background: #bdbdbd; flex: none; }

/* mail list (window b) */
.mail { flex: 1; min-width: 0; background: #eee; padding: 0 16px 0 21px; overflow: hidden; }
.mail-in { background: #fff; height: 100%; padding: 0 30px; overflow: hidden; }
.thead { height: 31px; border-bottom: 2px solid #426a9b; display: flex; align-items: flex-start; padding-top: 4px; font-size: 14px; font-weight: 700; color: #3f85c9; line-height: 16px; }
.th-a { width: 323px; padding-left: 9px; letter-spacing: .07px; }
.th-u { width: 148px; letter-spacing: .42px; }
.th-u em { font-style: normal; font-weight: 400; }
.th-c { color: #4a5560; }
.row { height: 57px; background: #fafafa; border-bottom: 1px solid #ddd; display: flex; align-items: center; font-size: 14px; color: #5a5a5a; }
.c-io { width: 86px; padding-left: 17px; display: flex; gap: 23px; flex: none; padding-bottom: 3px; }
.io { width: 16px; height: 16px; flex: none; }
.c-mail { width: 237px; flex: none; padding-bottom: 5px; letter-spacing: .18px; }
.c-use { width: 157px; flex: none; padding-bottom: 3px; }
.u-t { font-size: 14px; line-height: 20px; }
.bar { width: 131px; height: 20px; background: #f3f3f3; border-radius: 3px; box-shadow: inset 0 1px 1px #e8e8e8; overflow: hidden; }
.fill { height: 100%; background: #5bc0de; }
.a-pw, .a-q, .a-c, .a-d { display: flex; align-items: center; flex: none; color: #4a86c8; font-size: 14px; letter-spacing: .05px; padding-bottom: 4px; }
.a-pw { width: 112px; }
.a-q { width: 80px; }
.a-c { width: 163px; letter-spacing: .2px; }
.a-d { width: 71px; }
.a-key { width: 17px; height: 17px; margin-right: 10px; flex: none; }
.a-pen { width: 14px; height: 14px; margin-right: 4px; flex: none; }
.a-gear { width: 12px; height: 12px; margin-right: 8px; flex: none; }
.a-tr { width: 12px; height: 15px; margin-right: 5px; flex: none; }
.more { width: 75px; height: 40px; background: #6a96c2; border-radius: 4px; color: #fff; font-weight: 700; font-size: 14.500px; display: flex; align-items: center; padding: 0 0 1px 10px; flex: none; }
.more-c { width: 0; height: 0; margin-left: 9px; border: 4px solid transparent; border-top-color: #fff; border-bottom: 0; }

.scribble { position: absolute; left: 964px; top: 210px; width: 180px; height: 94px; }
.scribble-p { fill: #fff233; opacity: .93; }
```
